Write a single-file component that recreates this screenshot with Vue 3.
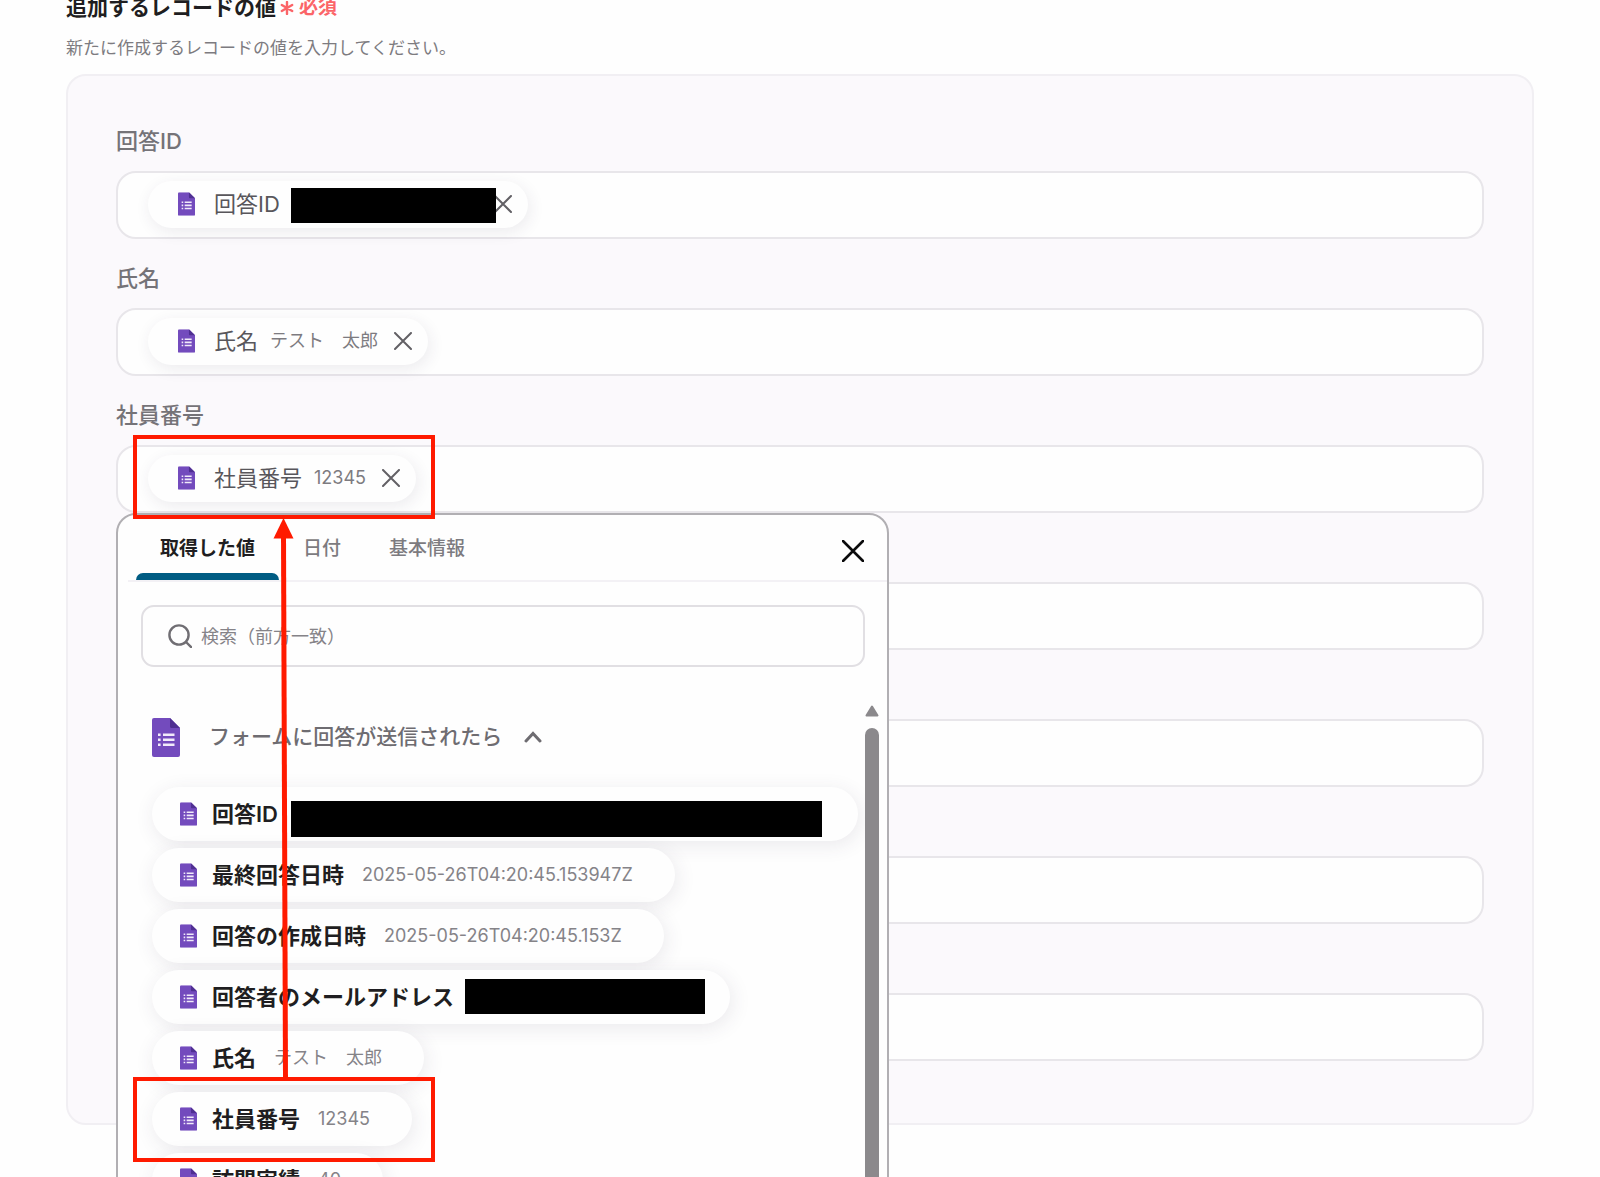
<template>
  <main class="page">
    <header class="page-head">
      <h2>
        追加するレコードの値
        <span class="required">
          <svg class="asterisk" viewBox="0 0 14 14" aria-hidden="true">
            <path d="M7 1V13M1.8 4L12.2 10M12.2 4L1.8 10" />
          </svg>
          必須
        </span>
      </h2>
      <p>新たに作成するレコードの値を入力してください。</p>
    </header>

    <section class="panel">
      <div v-for="field in fields" :key="field.id" class="field">
        <label :for="'field-' + field.id">{{ field.label }}</label>
        <div class="box">
          <span v-if="field.chip" class="chip">
            <svg class="form-icon" viewBox="0 0 28 39" aria-hidden="true">
              <use href="#form-doc" />
            </svg>
            <span class="chip-name">{{ field.label }}</span>
            <span v-if="field.chip.maskWidth" class="masked" :style="{ width: field.chip.maskWidth + 'px' }"></span>
            <span v-else class="chip-value">{{ field.chip.value }}</span>
            <button type="button" class="remove" @click="field.chip = null">
              <svg viewBox="0 0 18 18" aria-hidden="true">
                <path d="M1 1L17 17M17 1L1 17" />
              </svg>
            </button>
          </span>
          <input :id="'field-' + field.id" v-model="field.text" type="text" />

          <div v-if="field.id === activeField" class="picker">
            <div class="tabs">
              <button
                v-for="tab in tabs"
                :key="tab"
                type="button"
                class="tab"
                :class="{ active: tab === activeTab }"
                @click="activeTab = tab"
              >
                {{ tab }}
              </button>
              <button type="button" class="close" @click="activeField = null">
                <svg viewBox="0 0 22 22" aria-hidden="true">
                  <path d="M1 1L21 21M21 1L1 21" />
                </svg>
              </button>
            </div>

            <label class="search">
              <svg viewBox="0 0 24 24" aria-hidden="true">
                <circle cx="11" cy="11" r="9.6" />
                <path d="M18 18L23.4 23.4" />
              </svg>
              <input v-model="query" type="text" placeholder="検索（前方一致）" />
            </label>

            <div class="scroller">
              <div class="results">
                <button type="button" class="group" @click="open = !open">
                  <svg class="group-icon" viewBox="0 0 28 39" aria-hidden="true">
                    <use href="#form-doc" />
                  </svg>
                  <span>フォームに回答が送信されたら</span>
                  <svg class="chevron" viewBox="0 0 18 12" aria-hidden="true">
                    <path d="M2 10L9 2.5L16 10" />
                  </svg>
                </button>
                <ul v-if="open">
                  <li v-for="item in items" :key="item.name">
                    <button type="button" class="item">
                      <svg class="form-icon" viewBox="0 0 28 39" aria-hidden="true">
                        <use href="#form-doc" />
                      </svg>
                      <span class="item-name">{{ item.name }}</span>
                      <span v-if="item.maskWidth" class="masked" :style="{ width: item.maskWidth + 'px' }"></span>
                      <span v-else class="item-value">{{ item.value }}</span>
                    </button>
                  </li>
                </ul>
              </div>
              <div class="scrollbar">
                <svg viewBox="0 0 14 12" aria-hidden="true">
                  <path d="M7 1.5L12.5 10.5H1.5Z" />
                </svg>
                <div class="thumb"></div>
              </div>
            </div>
          </div>
        </div>
      </div>
    </section>

    <!-- guide marks drawn over the form -->
    <svg class="marks" width="900" height="1177" aria-hidden="true">
      <g class="masks">
        <rect x="291" y="188" width="205" height="35" />
        <rect x="291" y="801" width="531" height="36" />
        <rect x="465" y="979" width="240" height="35" />
      </g>
      <g class="frames">
        <rect x="135" y="437" width="298" height="80" />
        <rect x="135" y="1079" width="298" height="81" />
      </g>
      <path class="shaft" d="M283.5 534L285.5 1079" />
      <path class="tip" d="M283.5 518L293.5 538.5H273.5Z" />
    </svg>

    <svg class="sprite" width="0" height="0" aria-hidden="true">
      <symbol id="form-doc" viewBox="0 0 28 39">
        <path d="M2 0H18L28 10V37Q28 39 26 39H2Q0 39 0 37V2Q0 0 2 0Z" fill="#734bbd" />
        <path d="M18 0L28 10H19.5Q18 10 18 8.5Z" fill="#4f2f92" />
        <path
          d="M6 15.5H8.6V18H6ZM11 15.5H22.5V18H11ZM6 20.5H8.6V23H6ZM11 20.5H22.5V23H11ZM6 25.5H8.6V28H6ZM11 25.5H22.5V28H11Z"
          fill="#f1eafa"
        />
      </symbol>
    </svg>
  </main>
</template>

<script setup>
import { ref, reactive } from 'vue';

const activeField = ref(3);
const activeTab = ref('取得した値');
const query = ref('');
const open = ref(true);

const tabs = ['取得した値', '日付', '基本情報'];

const fields = reactive([
  { id: 1, label: '回答ID', text: '', chip: { maskWidth: 202 } },
  { id: 2, label: '氏名', text: '', chip: { value: 'テスト　太郎' } },
  { id: 3, label: '社員番号', text: '', chip: { value: '12345' } },
  { id: 4, label: '', text: '', chip: null },
  { id: 5, label: '', text: '', chip: null },
  { id: 6, label: '', text: '', chip: null },
  { id: 7, label: '', text: '', chip: null },
]);

const items = [
  { name: '回答ID', maskWidth: 526 },
  { name: '最終回答日時', value: '2025-05-26T04:20:45.153947Z' },
  { name: '回答の作成日時', value: '2025-05-26T04:20:45.153Z' },
  { name: '回答者のメールアドレス', maskWidth: 222 },
  { name: '氏名', value: 'テスト　太郎' },
  { name: '社員番号', value: '12345' },
  { name: '訪問実績', value: '40' },
];
</script>

<style>
body {
  background: #fefefe;
}
</style>

<style scoped>
.page {
  position: relative;
  box-sizing: border-box;
  height: 100vh;
  padding: 0 66px;
  overflow: hidden;
  font-family: Inter, "Noto Sans CJK JP", sans-serif;
  color: #1f1e21;
}
button,
input {
  font-family: inherit;
  color: inherit;
  border: none;
  background: none;
  padding: 0;
}
button {
  cursor: pointer;
}
svg {
  display: block;
  flex: none;
}
path,
circle {
  stroke-linecap: round;
}
h2 {
  display: flex;
  gap: 4px;
  margin: 0;
  font-size: 21px;
  line-height: 16px;
  font-weight: 600;
}
.required {
  display: flex;
  align-items: center;
  gap: 5px;
  font-size: 19px;
  color: #fb6468;
}
.asterisk {
  width: 14px;
  height: 14px;
  fill: none;
  stroke: #fb6468;
  stroke-width: 2.4;
}
.page-head p {
  margin: 20px 0 14px;
  font-size: 17px;
  line-height: 24px;
  color: #7d7b80;
}

.panel {
  display: flex;
  flex-direction: column;
  gap: 22px;
  padding: 48px 48px 62px;
  border: 2px solid #f1eff3;
  border-radius: 20px;
  background: #fbf9fc;
}
.field > label {
  display: block;
  height: 34px;
  margin-bottom: 13px;
  font-size: 22px;
  line-height: 34px;
  font-weight: 500;
  color: #757378;
}
.box {
  position: relative;
  display: flex;
  align-items: center;
  box-sizing: border-box;
  height: 68px;
  padding: 0 30px 2px;
  border: 2px solid #e8e6ea;
  border-radius: 20px;
  background: #fefefe;
}
.box > input {
  flex: 1;
  min-width: 0;
  height: 100%;
  font-size: 22px;
  outline: none;
}
.chip {
  display: flex;
  align-items: center;
  height: 47px;
  padding: 0 16px 0 30px;
  border-radius: 24px;
  background: #fefefe;
  box-shadow: 2px 4px 16px rgba(60, 45, 80, 0.09);
  line-height: 32px;
  white-space: nowrap;
}
.form-icon {
  width: 17px;
  height: 24px;
}
.chip-name {
  margin-left: 19px;
  font-size: 22px;
  color: #58565b;
}
.chip-value {
  margin: 0 16px 0 12px;
  font-size: 18px;
  color: #7d7b80;
}
.masked {
  margin-left: 12px;
}
.remove svg {
  width: 18px;
  height: 18px;
  fill: none;
  stroke: #626065;
  stroke-width: 2;
}

.picker {
  position: absolute;
  z-index: 2;
  top: 66px;
  left: -2px;
  box-sizing: border-box;
  width: 773px;
  border: 2px solid #b1afb3;
  border-radius: 20px;
  background: #fefefe;
}
.tabs {
  display: flex;
  align-items: stretch;
  box-sizing: border-box;
  height: 67px;
  margin-left: 10px;
  padding: 6px 23px 0 8px;
  border-bottom: 2px solid #f3f1f5;
}
.tab {
  padding: 4px 24px 0;
  border-bottom: 7px solid transparent;
  font-size: 19px;
  line-height: 28px;
  font-weight: 500;
  color: #7d7b80;
}
.tab.active {
  position: relative;
  font-weight: 600;
  color: #1f1e21;
}
.tab.active::after {
  content: "";
  position: absolute;
  left: 0;
  right: 0;
  bottom: -7px;
  height: 7px;
  border-radius: 7px 7px 0 0;
  background: #005c83;
}
.close {
  margin-left: auto;
}
.close svg {
  width: 22px;
  height: 22px;
  fill: none;
  stroke: #0b0b0c;
  stroke-width: 2.6;
}
.search {
  display: flex;
  align-items: center;
  gap: 9px;
  box-sizing: border-box;
  height: 62px;
  margin: 23px 22px 0 23px;
  padding: 0 25px;
  border: 2px solid #e1dfe3;
  border-radius: 13px;
}
.search svg {
  width: 24px;
  height: 24px;
  fill: none;
  stroke: #706e73;
  stroke-width: 2.4;
}
.search input {
  flex: 1;
  font-size: 18px;
  outline: none;
}
.search input::placeholder {
  color: #858388;
  opacity: 1;
}

.scroller {
  display: flex;
  justify-content: space-between;
  margin-top: 38px;
  padding: 0 8px 0 34px;
}
.results {
  flex: 1;
  padding-bottom: 24px;
}
.group {
  display: flex;
  align-items: center;
  height: 64px;
  font-size: 21px;
  line-height: 32px;
  font-weight: 500;
  color: #6e6c71;
}
.group-icon {
  width: 28px;
  height: 39px;
  margin-right: 29px;
}
.chevron {
  width: 18px;
  height: 12px;
  margin-left: 22px;
  fill: none;
  stroke: #6e6c71;
  stroke-width: 3;
}
ul {
  display: flex;
  flex-direction: column;
  gap: 7px;
  margin: 18px 0 0;
  padding: 0;
  list-style: none;
}
.item {
  display: flex;
  align-items: center;
  height: 54px;
  padding: 0 42px 0 28px;
  border-radius: 27px;
  background: #fefefe;
  box-shadow: 2px 4px 20px rgba(60, 45, 80, 0.1);
  line-height: 32px;
  white-space: nowrap;
}
.item-name {
  margin-left: 15px;
  font-size: 22px;
  font-weight: 600;
}
.item-value {
  margin-left: 18px;
  font-size: 18px;
  color: #858388;
}
.scrollbar {
  display: flex;
  flex-direction: column;
  gap: 11px;
  width: 14px;
}
.scrollbar svg {
  width: 14px;
  height: 12px;
  fill: #8b898c;
  stroke: #8b898c;
  stroke-width: 2;
  stroke-linejoin: round;
}
.thumb {
  flex: 1;
  border-radius: 7px;
  background: #8b898c;
}

.marks {
  position: absolute;
  z-index: 3;
  top: 0;
  left: 0;
  pointer-events: none;
}
.frames rect {
  fill: none;
  stroke: #ff1a00;
  stroke-width: 4;
}
.shaft {
  stroke: #ff1a00;
  stroke-width: 5;
  stroke-linecap: butt;
}
.tip {
  fill: #ff1a00;
}
.sprite {
  position: absolute;
}
</style>
